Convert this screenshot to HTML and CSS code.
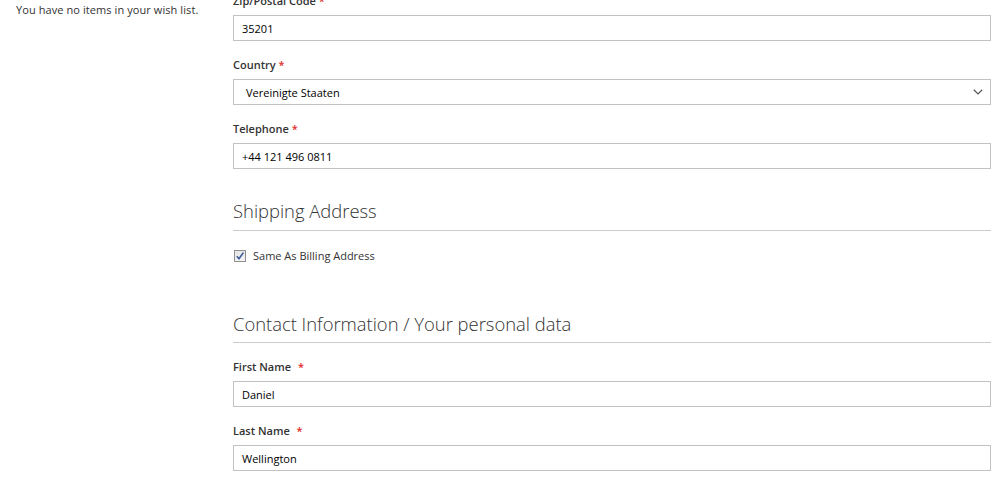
FILE: index.html
```html
<!DOCTYPE html>
<html>
<head>
<meta charset="utf-8">
<link rel="stylesheet" href="styles.css">
</head>
<body>
<div class="page">
  <aside class="sidebar">
    <div class="block-title">My Wish List</div>
    <div class="empty">You have no items in your wish list.</div>
  </aside>
  <main class="main">
    <div class="field first">
      <label class="label">Zip/Postal Code <span class="req">*</span></label>
      <div class="input">35201</div>
    </div>
    <div class="field">
      <label class="label">Country <span class="req">*</span></label>
      <div class="input select">
        <span>Vereinigte Staaten</span>
        <svg class="chev" width="10" height="6" viewBox="0 0 10 6"><path d="M0.8 0.8 L5 4.9 L9.2 0.8" fill="none" stroke="#555" stroke-width="1.2"/></svg>
      </div>
    </div>
    <div class="field">
      <label class="label">Telephone <span class="req">*</span></label>
      <div class="input">+44 121 496 0811</div>
    </div>

    <h2 class="section-title shipping">Shipping Address</h2>
    <div class="check-row">
      <span class="checkbox">
        <svg width="10" height="10" viewBox="0 0 10 10"><path d="M1.8 5.2 L4 7.8 L8.4 1.6" fill="none" stroke="#3b5a9a" stroke-width="1.6"/></svg>
      </span>
      <span class="check-label">Same As Billing Address</span>
    </div>

    <h2 class="section-title contact">Contact Information / Your personal data</h2>
    <div class="field">
      <label class="label">First Name <span class="req sp">*</span></label>
      <div class="input">Daniel</div>
    </div>
    <div class="field">
      <label class="label">Last Name <span class="req sp">*</span></label>
      <div class="input">Wellington</div>
    </div>
  </main>
</div>
</body>
</html>
```

FILE: styles.css
```css
* { box-sizing: border-box; }
html, body { margin: 0; padding: 0; background: #fff; }
body {
  font-family: "Open Sans", "Liberation Sans", sans-serif;
  color: #333;
  font-size: 11px;
  overflow: hidden;
  height: 480px;
}
.page {
  display: flex;
  align-items: flex-start;
}
.sidebar {
  width: 233px;
  padding-left: 16px;
  margin-top: -14px;
}
.block-title {
  font-size: 11px;
  font-weight: 600;
  line-height: 16px;
  text-transform: uppercase;
  color: #555;
}
.empty {
  line-height: 16px;
  font-size: 11px;
  letter-spacing: 0.08px;
}
.main {
  width: 758px;
  display: flex;
  flex-direction: column;
}
.field {
  display: flex;
  flex-direction: column;
  margin-top: 16px;
}
.field.first { margin-top: -7px; }
.label {
  font-weight: 600;
  line-height: 16px;
  margin-bottom: 6px;
  font-size: 11px;
}
.req { color: #e02b27; }
.req.sp { margin-left: 4px; }
.input {
  height: 26px;
  border: 1px solid #c2c2c2;
  padding: 0 8px;
  display: flex;
  align-items: center;
  font-size: 11px;
  color: #000;
}
.select {
  padding-left: 12px;
  padding-right: 7px;
  justify-content: space-between;
}
.chev { display: block; }
.section-title {
  font-size: 18.4px;
  font-weight: 300;
  line-height: 24px;
  margin: 30px 0 0;
  padding-bottom: 7px;
  border-bottom: 1px solid #ccc;
  color: #333;
}
.section-title.contact {
  margin-top: 48px;
  padding-bottom: 6px;
}
.check-row {
  display: flex;
  align-items: center;
  margin-top: 17px;
  height: 16px;
}
.checkbox {
  width: 12px;
  height: 12px;
  border: 1px solid #8e8f8f;
  background: linear-gradient(#e6e6e6, #f4f4f4);
  margin-left: 1px;
  display: flex;
  align-items: center;
  justify-content: center;
}
.checkbox svg { display: block; }
.check-label {
  margin-left: 7px;
  line-height: 16px;
}
.contact + .field { margin-top: 16px; }
```
